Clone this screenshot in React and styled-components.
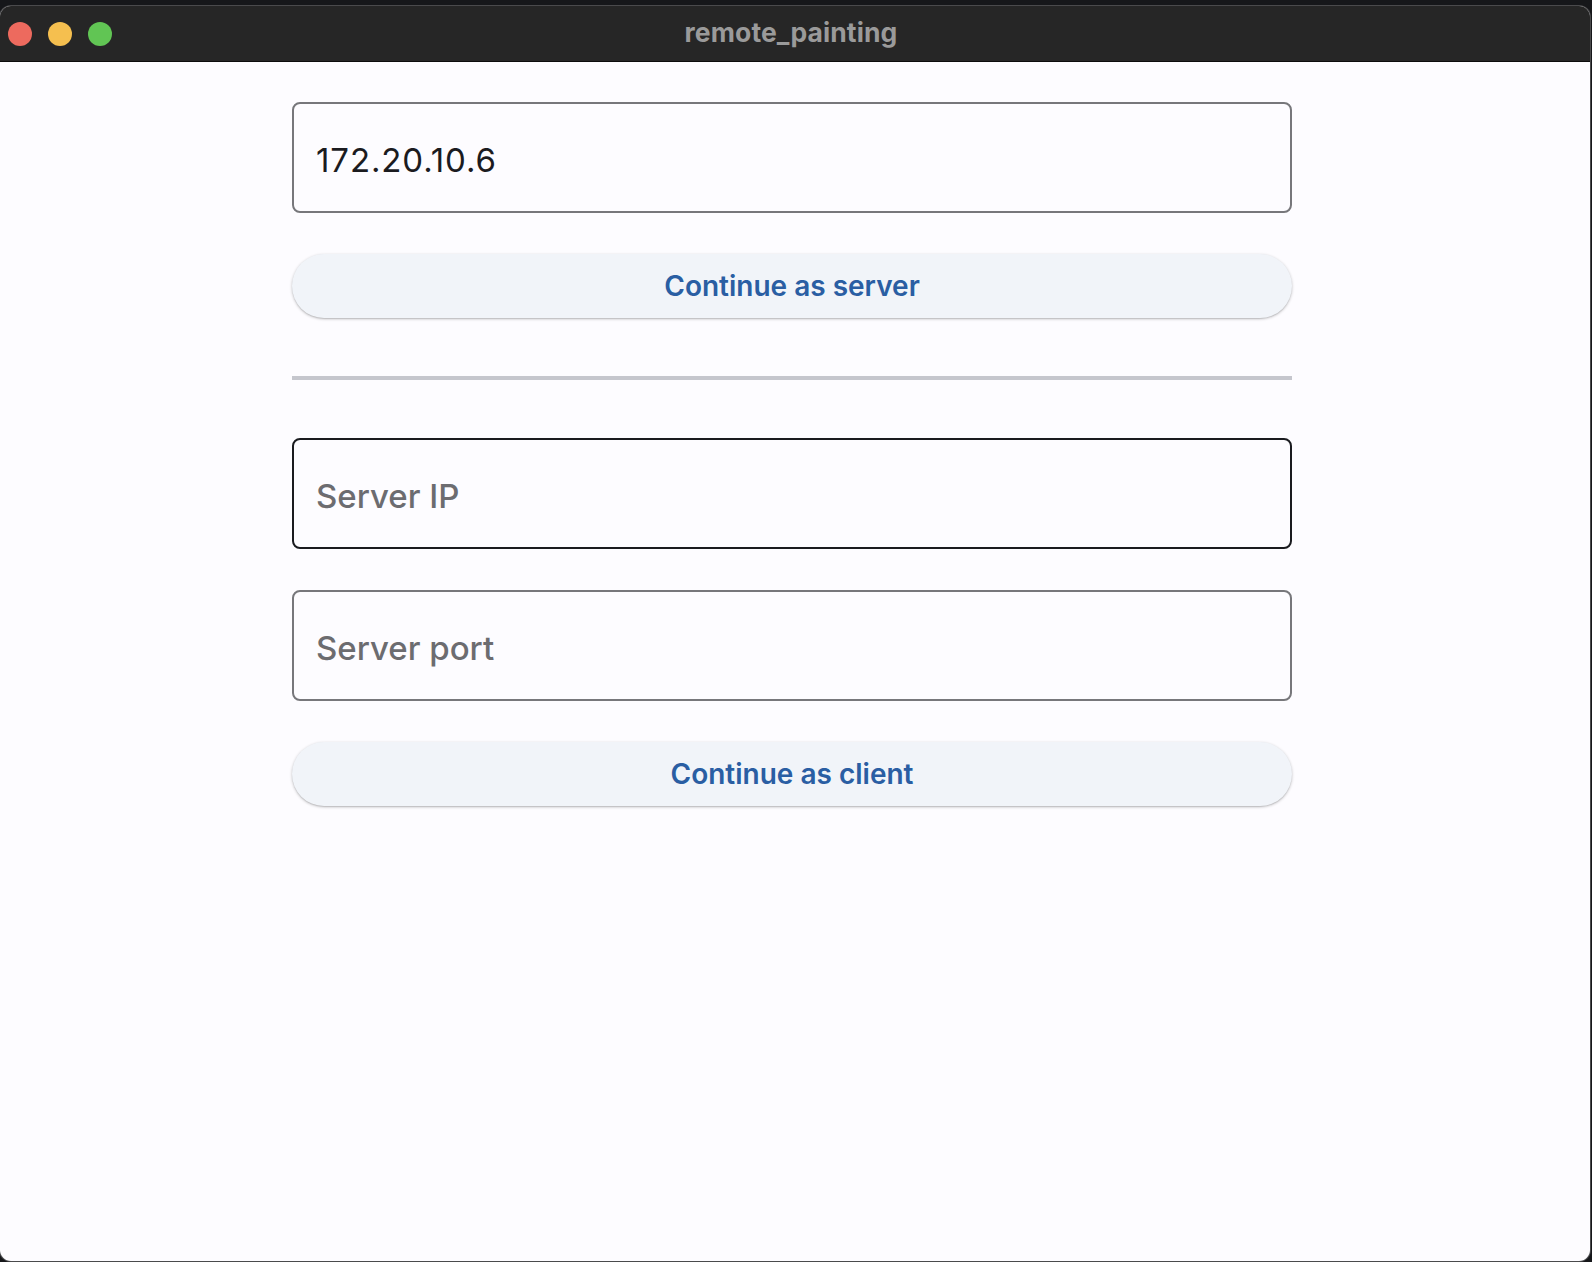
import React from "react";
import styled, { createGlobalStyle } from "styled-components";

const GlobalStyle = createGlobalStyle`
  html, body {
    margin: 0;
    padding: 0;
    background: #16171a;
  }
  #root {
    height: 1262px;
    display: flex;
  }
`;

const Window = styled.div`
  flex: 1;
  margin: 6px 2px 1px 0;
  display: flex;
  flex-direction: column;
  border-radius: 11px;
  overflow: hidden;
  background: #fdfcff;
  box-shadow: 0 0 0 1px #4a4a4c;
  font-family: Inter, "Noto Sans", sans-serif;
`;

const TitleBar = styled.div`
  height: 55px;
  flex-shrink: 0;
  display: flex;
  align-items: center;
  position: relative;
  background: #262626;
  border-bottom: 1px solid #0c0c0c;
`;

const Lights = styled.div`
  display: flex;
  gap: 16px;
  padding-left: 8px;
`;

const Light = styled.span`
  width: 24px;
  height: 24px;
  border-radius: 50%;
  background: ${(p) => p.color};
`;

const Title = styled.div`
  position: absolute;
  left: 0;
  right: 8px;
  top: 10px;
  text-align: center;
  color: #9a9a9a;
  font-weight: 700;
  font-size: 26.5px;
  letter-spacing: 0.1px;
`;

const Content = styled.div`
  flex: 1;
  display: flex;
  flex-direction: column;
  width: 1000px;
  padding: 40px 0 0 292px;
`;

const Field = styled.input`
  box-sizing: border-box;
  height: 111px;
  width: 100%;
  margin-bottom: ${(p) => p.$gap}px;
  padding: 4px 22px 0;
  border: 2px solid ${(p) => (p.$focused ? "#1a1b1f" : "#77777b")};
  border-radius: 8px;
  background: transparent;
  font-family: Inter, "Noto Sans", sans-serif;
  font-size: 33px;
  letter-spacing: 0.9px;
  color: #1b1b1f;
  outline: none;
  &::placeholder {
    color: #6c6c70;
    font-weight: 500;
    letter-spacing: 0;
  }
`;

const Button = styled.button`
  height: 64px;
  width: 100%;
  margin-bottom: ${(p) => p.$gap}px;
  border: none;
  border-radius: 32px;
  background: #f1f4f9;
  box-shadow: 0 1px 3px rgba(0, 0, 0, 0.25), 0 1px 1px rgba(0, 0, 0, 0.08);
  color: #2a5ea3;
  font-family: Inter, "Noto Sans", sans-serif;
  font-size: 28px;
  font-weight: 600;
  cursor: pointer;
`;

const Divider = styled.hr`
  margin: 0 0 58px;
  height: 4px;
  border: none;
  background: #c5c6cd;
`;

export default function App() {
  return (
    <>
      <GlobalStyle />
      <Window>
        <TitleBar>
          <Lights>
            <Light color="#ed6a5e" />
            <Light color="#f5bf4f" />
            <Light color="#61c554" />
          </Lights>
          <Title>remote_painting</Title>
        </TitleBar>
        <Content>
          <Field $gap={41} defaultValue="172.20.10.6" />
          <Button $gap={58}>Continue as server</Button>
          <Divider />
          <Field $gap={41} $focused placeholder="Server IP" />
          <Field $gap={41} placeholder="Server port" />
          <Button $gap={0}>Continue as client</Button>
        </Content>
      </Window>
    </>
  );
}
